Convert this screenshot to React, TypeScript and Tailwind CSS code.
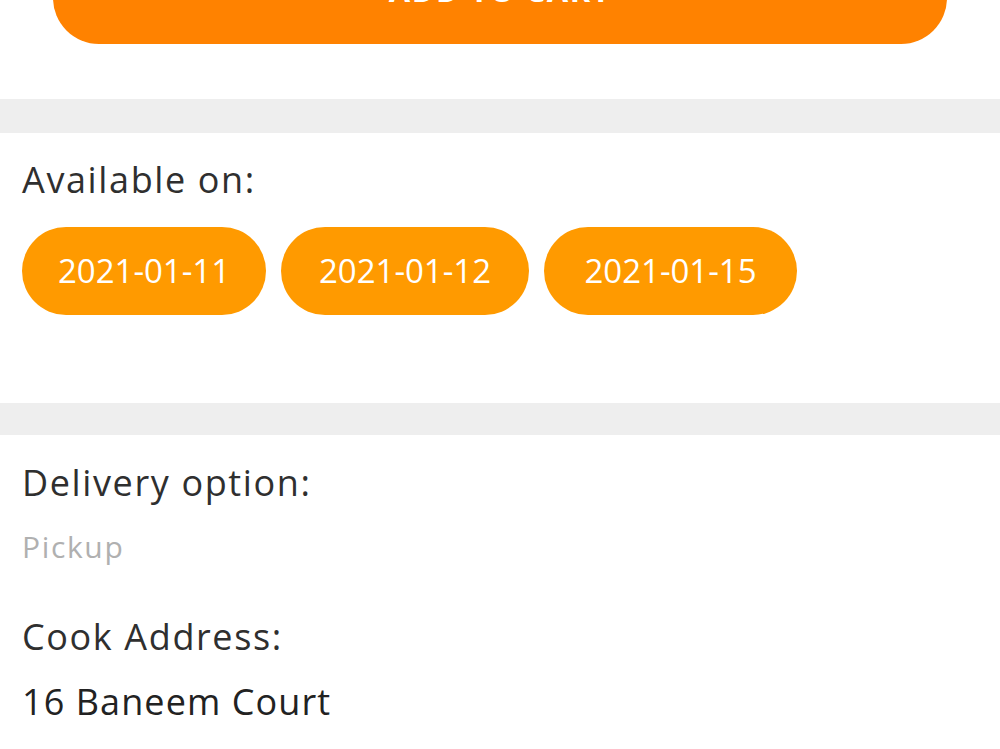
const dates = [
  { label: "2021-01-11", w: "w-[244px]" },
  { label: "2021-01-12", w: "w-[248px]" },
  { label: "2021-01-15", w: "w-[253px]" },
];

const font = { fontFamily: "'Open Sans', Lato, sans-serif" };

function Divider({ h }: { h: string }) {
  return <div className={`w-full bg-[#eeeeee] ${h}`} />;
}

export default function App() {
  return (
    <div className="w-[1000px] h-[749px] overflow-hidden bg-white text-[#2f2f2f]" style={font}>
      {/* cart button, scrolled partly out of view */}
      <div className="px-[53px] pb-[55px]">
        <button className="w-full h-[100px] -mt-[56px] rounded-[46px] bg-[#ff8200] text-white text-[31px] font-bold tracking-[0.05em] uppercase flex items-center justify-center pb-[8px]">
          Add to cart
        </button>
      </div>

      <Divider h="h-[34px]" />

      <div className="px-[22px] pt-[27px] pb-[88px]">
        <p className="text-[36px] leading-[40px] tracking-[0.045em]">Available on:</p>
        <div className="mt-[27px] flex gap-[15px]">
          {dates.map((d) => (
            <span
              key={d.label}
              className={`h-[88px] ${d.w} rounded-full bg-[#ff9a00] text-white text-[33px] flex items-center justify-center`}
            >
              {d.label}
            </span>
          ))}
        </div>
      </div>

      <Divider h="h-[32px]" />

      <div className="px-[22px] pt-[28px]">
        <p className="text-[36px] leading-[40px] tracking-[0.045em]">Delivery option:</p>
        <p className="mt-[26px] text-[30px] leading-[36px] tracking-[0.055em] text-[#b0b0b0]">Pickup</p>
        <p className="mt-[52px] text-[36px] leading-[40px] tracking-[0.045em]">Cook Address:</p>
        <p className="mt-[25px] text-[36px] leading-[40px] tracking-[0.03em] text-[#222222]">16 Baneem Court</p>
      </div>
    </div>
  );
}
